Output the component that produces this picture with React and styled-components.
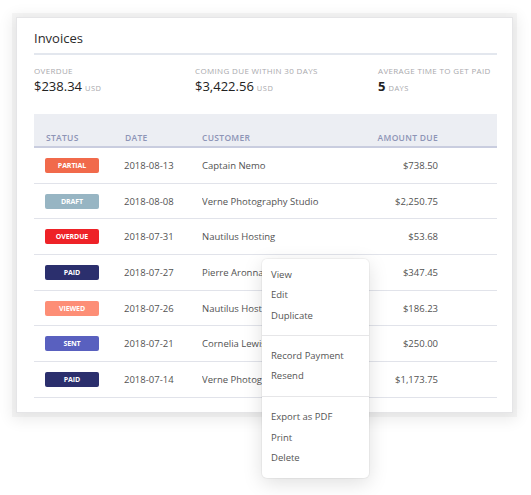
import React from "react";
import styled, { createGlobalStyle } from "styled-components";

const Global = createGlobalStyle`
  html, body { margin: 0; padding: 0; background: #ffffff; }
  body { font-family: "Open Sans", "Noto Sans", sans-serif; color: #4f4f4f; }
  * { box-sizing: border-box; }
`;

const Page = styled.div`
  position: relative;
  width: 531px;
  height: 495px;
  padding: 17px 18px 0 16px;
`;

const Panel = styled.section`
  width: 497px;
  height: 396px;
  background: #fff;
  border: 1px solid #e5e5e7;
  box-shadow: 0 0 0 4px rgba(0, 0, 0, 0.03), 0 3px 14px 4px rgba(0, 0, 0, 0.08);
  padding: 0 15px 0 17px;
`;

const Title = styled.h1`
  margin: 0;
  padding: 11px 0 6px;
  font-size: 13px;
  line-height: 18px;
  font-weight: 400;
  color: #2b2b2b;
  border-bottom: 2px solid #e3e7ee;
`;

const Stats = styled.div`
  display: grid;
  grid-template-columns: 161px 183px 1fr;
  padding-top: 10px;
`;

const Stat = styled.div`
  display: flex;
  flex-direction: column;
`;

const StatLabel = styled.div`
  font-size: 8px;
  line-height: 12px;
  letter-spacing: 0.35px;
  text-transform: uppercase;
  color: #a9a9ad;
`;

const StatValue = styled.div`
  font-size: 13px;
  line-height: 19px;
  color: #222;
  font-weight: ${(p) => (p.$bold ? 700 : 500)};
`;

const Unit = styled.span`
  font-size: 7.5px;
  letter-spacing: 0.5px;
  color: #a9a9ad;
  margin-left: 3px;
  font-weight: 400;
`;

const Table = styled.div`
  margin-top: 16px;
`;

const Row = styled.div`
  display: grid;
  grid-template-columns: 79px 78px 1fr 100px;
  align-items: center;
  padding: 0 59px 0 11px;
`;

const HeadRow = styled(Row)`
  background: #eceef3;
  padding-top: 18px;
  padding-bottom: 2px;
  border-bottom: 2px solid #c9cddf;
`;

const HeadCell = styled.div`
  font-size: 8.5px;
  line-height: 12px;
  font-weight: 600;
  letter-spacing: 0.3px;
  color: #8d94b6;
  text-align: ${(p) => (p.$right ? "right" : "left")};
  padding-left: ${(p) => (p.$pad ? "1px" : "0")};
`;

const BodyRow = styled(Row)`
  height: 35.7px;
  border-bottom: 1px solid #e1e3ea;
`;

const Cell = styled.div`
  font-size: 9.5px;
  color: #525252;
  text-align: ${(p) => (p.$right ? "right" : "left")};
  white-space: nowrap;
  overflow: hidden;
`;

const Badge = styled.span`
  display: flex;
  align-items: center;
  justify-content: center;
  width: 54px;
  height: 15px;
  border-radius: 2px;
  background: ${(p) => p.$bg};
  color: #fff;
  font-size: 7px;
  font-weight: 700;
  text-transform: uppercase;
  letter-spacing: -0.1px;
`;

const Menu = styled.div`
  position: absolute;
  left: 262px;
  top: 259px;
  width: 107px;
  background: #fff;
  border-radius: 5px;
  box-shadow: 0 0 0 1px rgba(0, 0, 0, 0.04), 0 5px 20px rgba(0, 0, 0, 0.13);
`;

const MenuSection = styled.div`
  padding: ${(p) => (p.$first ? "6px 0 9px" : "10px 0")};
  border-top: ${(p) => (p.$first ? "none" : "1px solid #e6e6e8")};
`;

const MenuItem = styled.div`
  height: 20.3px;
  line-height: 20.3px;
  padding-left: 9px;
  font-size: 9.5px;
  color: #555;
`;

const rows = [
  ["partial", "#f16a4b", "2018-08-13", "Captain Nemo", "$738.50"],
  ["draft", "#97b5c3", "2018-08-08", "Verne Photography Studio", "$2,250.75"],
  ["overdue", "#ee2227", "2018-07-31", "Nautilus Hosting", "$53.68"],
  ["paid", "#2b2f6d", "2018-07-27", "Pierre Aronnax", "$347.45"],
  ["viewed", "#fd8e76", "2018-07-26", "Nautilus Hosting", "$186.23"],
  ["sent", "#5960bf", "2018-07-21", "Cornelia Lewis", "$250.00"],
  ["paid", "#2b2f6d", "2018-07-14", "Verne Photography Studio", "$1,173.75"],
];

const menu = [
  ["View", "Edit", "Duplicate"],
  ["Record Payment", "Resend"],
  ["Export as PDF", "Print", "Delete"],
];

export default function App() {
  return (
    <Page>
      <Global />
      <Panel>
        <Title>Invoices</Title>
        <Stats>
          <Stat>
            <StatLabel>Overdue</StatLabel>
            <StatValue>
              $238.34<Unit>USD</Unit>
            </StatValue>
          </Stat>
          <Stat>
            <StatLabel>Coming due within 30 days</StatLabel>
            <StatValue>
              $3,422.56<Unit>USD</Unit>
            </StatValue>
          </Stat>
          <Stat>
            <StatLabel>Average time to get paid</StatLabel>
            <StatValue $bold>
              5<Unit>DAYS</Unit>
            </StatValue>
          </Stat>
        </Stats>
        <Table>
          <HeadRow>
            <HeadCell $pad>STATUS</HeadCell>
            <HeadCell $pad>DATE</HeadCell>
            <HeadCell>CUSTOMER</HeadCell>
            <HeadCell $right>AMOUNT DUE</HeadCell>
          </HeadRow>
          {rows.map((r, i) => (
            <BodyRow key={i}>
              <div>
                <Badge $bg={r[1]}>{r[0]}</Badge>
              </div>
              <Cell>{r[2]}</Cell>
              <Cell>{r[3]}</Cell>
              <Cell $right>{r[4]}</Cell>
            </BodyRow>
          ))}
        </Table>
      </Panel>
      <Menu>
        {menu.map((sec, i) => (
          <MenuSection key={i} $first={i === 0}>
            {sec.map((m) => (
              <MenuItem key={m}>{m}</MenuItem>
            ))}
          </MenuSection>
        ))}
      </Menu>
    </Page>
  );
}
